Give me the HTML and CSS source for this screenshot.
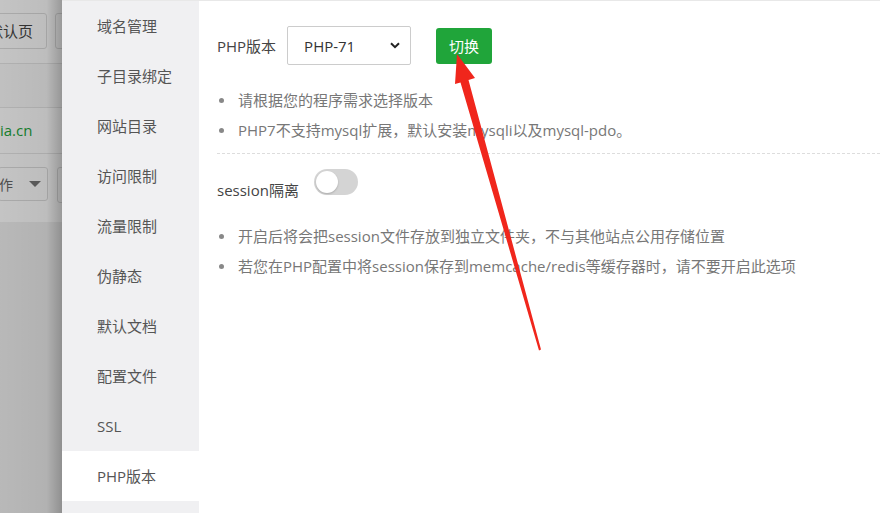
FILE: index.html
```html
<!DOCTYPE html>
<html lang="zh-CN">
<head>
  <meta charset="UTF-8">
  <title>网站设置 - PHP版本</title>
  <link rel="stylesheet" href="styles.css">
</head>
<body>
  <div class="page">
    <div class="backdrop">
      <div class="bgTop">
        <div class="bgToolbar">
          <span class="bgBtn bgBtnWide">默认页</span>
          <span class="bgBtn"></span>
        </div>
        <div class="bgRow"></div>
        <div class="bgRow bgRowSite"><span class="bgDomain">ia.cn</span></div>
        <div class="bgRow bgRowTools">
          <span class="bgSelect">作 <i class="bgCaret"></i></span>
          <span class="bgBtn"></span>
        </div>
      </div>
    </div>

    <div class="layer">
      <ul class="sideMenu">
        <li>域名管理</li>
        <li>子目录绑定</li>
        <li>网站目录</li>
        <li>访问限制</li>
        <li>流量限制</li>
        <li>伪静态</li>
        <li>默认文档</li>
        <li>配置文件</li>
        <li>SSL</li>
        <li class="active">PHP版本</li>
      </ul>

      <div class="content">
        <div class="versionRow">
          <span class="fieldLabel">PHP版本</span>
          <div class="select">
            <span>PHP-71</span>
            <svg width="10" height="7" viewBox="0 0 10 7"><path d="M1 1.2 5 5.2 9 1.2" fill="none" stroke="#222" stroke-width="2"/></svg>
          </div>
          <button class="btnSwitch">切换</button>
        </div>
        <ul class="tips">
          <li>请根据您的程序需求选择版本</li>
          <li>PHP7不支持mysql扩展，默认安装mysqli以及mysql-pdo。</li>
        </ul>
        <div class="divider"></div>
        <div class="sessionRow">
          <span class="fieldLabel">session隔离</span>
          <span class="toggle"><i></i></span>
        </div>
        <ul class="tips tipsSession">
          <li>开启后将会把session文件存放到独立文件夹，不与其他站点公用存储位置</li>
          <li>若您在PHP配置中将session保存到memcache/redis等缓存器时，请不要开启此选项</li>
        </ul>
      </div>
    </div>

    <svg class="arrow" width="880" height="513" viewBox="0 0 880 513">
      <polygon fill="#f0261c" points="457,54 455,84 460.5,82.5 539,350.5 541,349.5 468.5,80 475,78"/>
    </svg>
  </div>
</body>
</html>
```

FILE: styles.css
```css
* {
  margin: 0;
  padding: 0;
  box-sizing: border-box;
}
body {
  width: 880px;
  height: 513px;
  overflow: hidden;
  background: #fff;
  font-family: "Open Sans", "Noto Sans CJK SC", sans-serif;
  font-size: 15px;
  color: #555;
}
ul {
  list-style: none;
}
.page {
  position: relative;
  display: flex;
  height: 513px;
  overflow: hidden;
}

/* page behind the dialog, dimmed */
.backdrop {
  position: relative;
  width: 62px;
  flex-shrink: 0;
  overflow: hidden;
  background: #f0f0f0;
}
.backdrop::after {
  content: "";
  position: absolute;
  inset: 0;
  background: linear-gradient(to right, rgba(0,0,0,0.23) 0, rgba(0,0,0,0.26) 75%, rgba(0,0,0,0.4) 100%);
}
.bgTop {
  height: 222px;
  background: #fff;
}
.bgToolbar {
  display: flex;
  gap: 8px;
  height: 63px;
  padding-top: 13px;
  margin-left: -40px;
}
.bgBtn {
  display: block;
  flex-shrink: 0;
  width: 60px;
  height: 36px;
  border: 1px solid #ddd;
  border-radius: 3px;
  line-height: 34px;
  color: #444;
  white-space: nowrap;
}
.bgBtnWide {
  width: 87px;
  text-align: right;
  padding-right: 13px;
}
.bgRow {
  height: 44px;
  border-top: 1px solid #e6e6e6;
  background: #fafafa;
}
.bgRowSite {
  height: 46px;
  background: #fff;
  line-height: 45px;
}
.bgDomain {
  color: #20a53a;
  font-size: 15px;
}
.bgRowTools {
  display: flex;
  gap: 9px;
  height: 69px;
  padding-top: 13px;
  background: #fff;
}
.bgSelect {
  display: flex;
  flex-shrink: 0;
  align-items: center;
  gap: 16px;
  width: 50px;
  height: 34px;
  border: 1px solid #ddd;
  border-radius: 3px;
  margin-left: -2px;
  color: #666;
  font-size: 14px;
  white-space: nowrap;
}
.bgCaret {
  width: 0;
  height: 0;
  border-left: 6px solid transparent;
  border-right: 6px solid transparent;
  border-top: 6px solid #777;
}

/* dialog */
.layer {
  flex: 1;
  display: flex;
  border-top: 1px solid #e8e8e8;
  background: #fff;
}
.sideMenu {
  width: 137px;
  flex-shrink: 0;
  background: #f0f0f2;
}
.sideMenu li {
  height: 50px;
  line-height: 50px;
  padding-left: 35px;
  color: #555;
}
.sideMenu li.active {
  background: #fff;
}
.content {
  flex: 1;
  padding: 25px 0 0 18px;
}
.versionRow {
  display: flex;
  align-items: center;
}
.fieldLabel {
  color: #444;
  line-height: 20px;
}
.select {
  display: flex;
  align-items: center;
  justify-content: space-between;
  width: 124px;
  height: 39px;
  margin-left: 11px;
  padding: 0 10px 0 16px;
  border: 1px solid #ccc;
  border-radius: 2px;
  color: #333;
}
.btnSwitch {
  width: 56px;
  height: 36px;
  margin-left: 25px;
  border: none;
  border-radius: 3px;
  background: #20a53a;
  color: #fff;
  font-family: inherit;
  font-size: 15px;
}
.tips {
  margin-top: 20px;
}
.tips li {
  position: relative;
  padding-left: 21px;
  line-height: 30px;
  color: #777;
  white-space: nowrap;
}
.tips li::before {
  content: "";
  position: absolute;
  left: 2px;
  top: 13px;
  width: 5px;
  height: 5px;
  border-radius: 50%;
  background: #888;
}
.divider {
  margin-top: 8px;
  border-top: 1px dashed #ddd;
}
.sessionRow {
  display: flex;
  align-items: flex-start;
  margin-top: 26px;
}
.toggle {
  position: relative;
  width: 44px;
  height: 26px;
  margin: -11px 0 0 15px;
  border-radius: 13px;
  background: #d4d4d4;
}
.toggle i {
  position: absolute;
  left: 2px;
  top: 2px;
  width: 22px;
  height: 22px;
  border-radius: 50%;
  background: #fff;
  box-shadow: 0 1px 2px rgba(0,0,0,0.2);
}
.tipsSession {
  margin-top: 21px;
}

.arrow {
  position: absolute;
  left: 0;
  top: 0;
  pointer-events: none;
}
```
